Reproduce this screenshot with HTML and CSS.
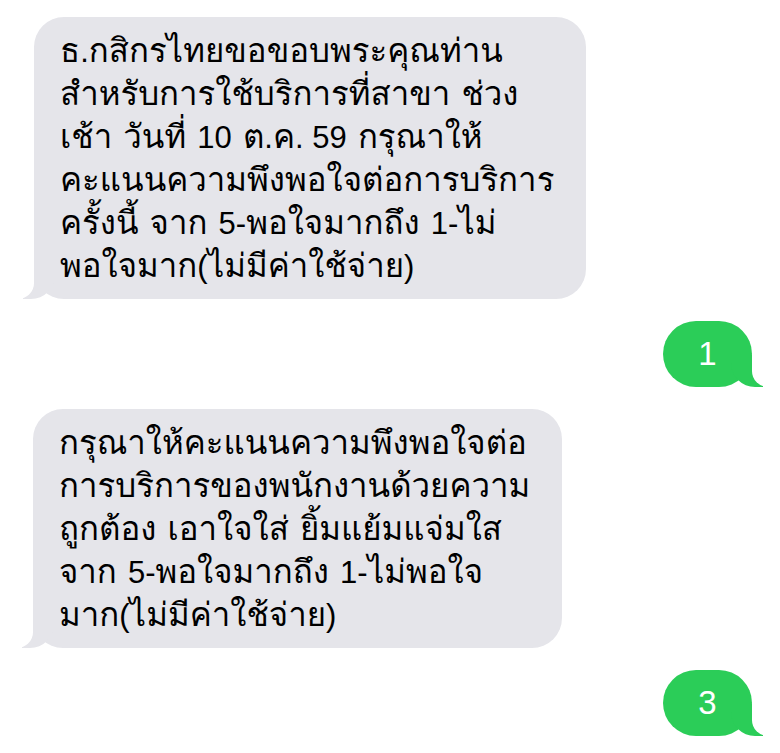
FILE: index.html
```html
<!DOCTYPE html>
<html lang="th">
<head>
<meta charset="utf-8">
<title>Messages</title>
<link rel="stylesheet" href="styles.css">
</head>
<body>
<div class="thread">
  <div class="bubble received first">
    <div class="line">ธ<span class="lat">.</span>กสิกรไทยขอขอบพระคุณท่าน</div>
    <div class="line">สำหรับการใช้บริการที่สาขา ช่วง</div>
    <div class="line">เช้า วันที่ <span class="lat">10</span> ต<span class="lat">.</span>ค<span class="lat">. 59</span> กรุณาให้</div>
    <div class="line">คะแนนความพึงพอใจต่อการบริการ</div>
    <div class="line">ครั้งนี้ จาก <span class="lat">5-</span>พอใจมากถึง <span class="lat">1-</span>ไม่</div>
    <div class="line">พอใจมาก<span class="lat">(</span>ไม่มีค่าใช้จ่าย<span class="lat">)</span></div>
  </div>
  <div class="bubble sent">1</div>
  <div class="bubble received second">
    <div class="line">กรุณาให้คะแนนความพึงพอใจต่อ</div>
    <div class="line">การบริการของพนักงานด้วยความ</div>
    <div class="line">ถูกต้อง เอาใจใส่ ยิ้มแย้มแจ่มใส</div>
    <div class="line">จาก <span class="lat">5-</span>พอใจมากถึง <span class="lat">1-</span>ไม่พอใจ</div>
    <div class="line">มาก<span class="lat">(</span>ไม่มีค่าใช้จ่าย<span class="lat">)</span></div>
  </div>
  <div class="bubble sent">3</div>
</div>
</body>
</html>
```
FILE: styles.css
```css
html, body {
  margin: 0;
  padding: 0;
  background: #ffffff;
}
body {
  width: 780px;
  height: 753px;
  overflow: hidden;
  font-family: "Loma", "Garuda", "Noto Sans Thai Looped", "Noto Sans Thai", "Noto Sans", "DejaVu Sans", sans-serif;
}
.thread {
  display: flex;
  flex-direction: column;
  padding-top: 17px;
}
.bubble {
  position: relative;
  box-sizing: border-box;
}
.received {
  align-self: flex-start;
  margin-left: 34px;
  background: #e5e5ea;
  color: #000;
  border-radius: 30px;
  padding: 12px 20px 12px 26px;
  font-size: 33px;
  line-height: 43px;
  white-space: nowrap;
}
.lat {
  font-family: "Liberation Sans", "Noto Sans", sans-serif;
  font-size: 31px;
}
.received.first { width: 552px; }
.received.second { width: 529px; margin-left: 33px; margin-top: 22px; }
.received::before {
  content: "";
  position: absolute;
  bottom: 0;
  left: -11px;
  width: 32px;
  height: 32px;
  background: #e5e5ea;
  border-bottom-right-radius: 24px;
}
.received::after {
  content: "";
  position: absolute;
  bottom: 0;
  left: -16px;
  width: 16px;
  height: 32px;
  background: #ffffff;
  border-bottom-right-radius: 16px;
}
.line { position: relative; z-index: 1; height: 43px; }
.sent {
  align-self: flex-end;
  margin-right: 28px;
  margin-top: 22px;
  width: 89px;
  height: 66px;
  border-radius: 33px;
  background: #2bcd58;
  color: #ffffff;
  display: flex;
  align-items: center;
  justify-content: center;
  font-family: "Liberation Sans", "Noto Sans", sans-serif;
  font-size: 33px;
  font-weight: 400;
}
.sent::before {
  content: "";
  position: absolute;
  bottom: 0;
  right: -11px;
  width: 32px;
  height: 32px;
  background: #2bcd58;
  border-bottom-left-radius: 24px;
}
.sent::after {
  content: "";
  position: absolute;
  bottom: 0;
  right: -16px;
  width: 16px;
  height: 32px;
  background: #ffffff;
  border-bottom-left-radius: 16px;
}
```
